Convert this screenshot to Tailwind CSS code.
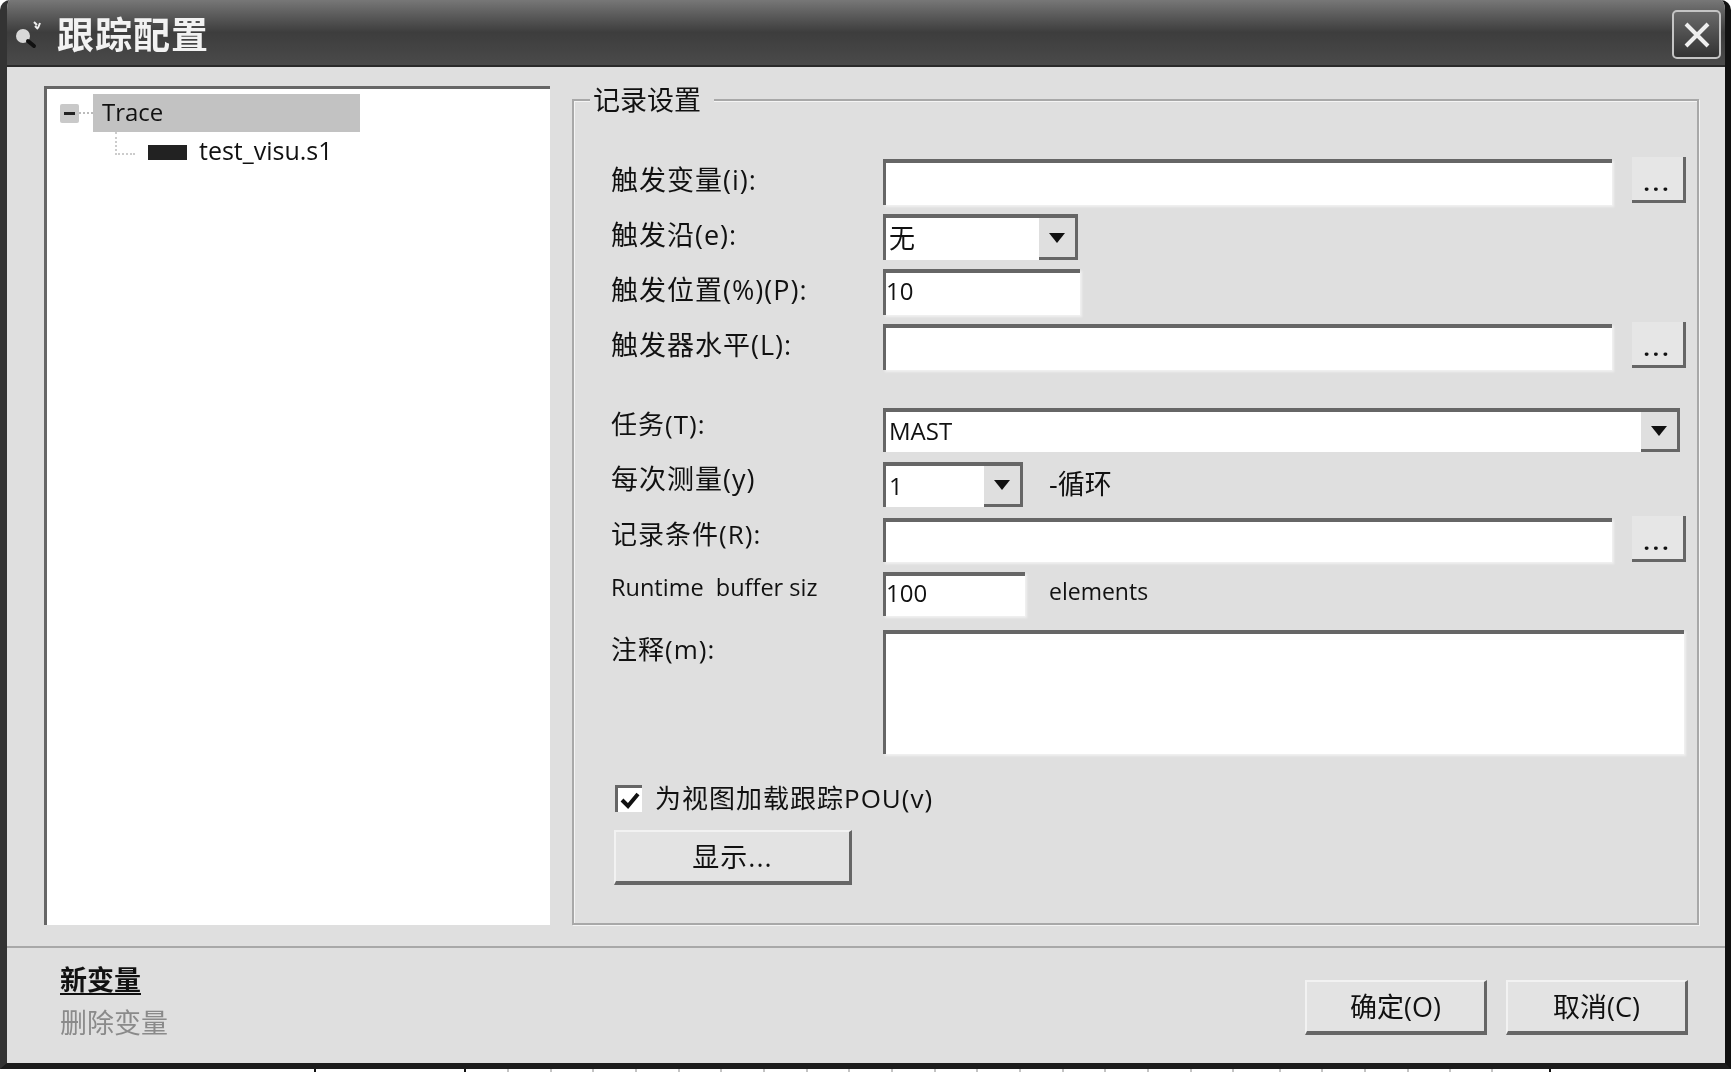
<!DOCTYPE html>
<html lang="zh">
<head>
  <meta charset="UTF-8" />
  <title>跟踪配置</title>
  <script src="https://cdn.jsdelivr.net/npm/@tailwindcss/browser@4"></script>
</head>
<body class="bg-white overflow-hidden">
  <div class="w-[1731px] h-[1072px] flex flex-col blur-[0.5px] font-['Open_Sans','Noto_Sans_CJK_SC',sans-serif] text-[24px] leading-none text-[#111]">

    <!-- window -->
    <div class="w-[1731px] h-[1069px] flex flex-col bg-[#dfdfdf] rounded-t-[10px] overflow-hidden border-l-[7px] border-r-[6px] border-b-[6px] border-l-[#333] border-r-[#111] border-b-[#1c1c1c]">

      <!-- title bar -->
      <div class="-ml-[7px] -mr-[6px] h-[67px] shrink-0 flex items-center pt-[4px] bg-gradient-to-b from-[#777] via-[#3d3d3d] to-[#4a4a4a] border-b-2 border-[#2a2a2a]">
        <svg class="ml-[12px] w-[32px] h-[32px] shrink-0" viewBox="0 0 32 32">
          <circle cx="11" cy="17" r="7" fill="#d8d8d8" />
          <path d="M16 22l6 5" stroke="#111" stroke-width="4" stroke-linecap="round" />
          <path d="M23 7l3 3M28 4l-2 5M22 3l3 3" stroke="#eee" stroke-width="2" />
        </svg>
        <span class="ml-[13px] text-[37px] font-bold tracking-[1px] text-[#f2f2f2]">跟踪配置</span>
        <button class="ml-auto mr-[10px] w-[49px] h-[49px] rounded-[5px] border-2 border-[#c4c4c4] bg-gradient-to-b from-[#6a6a6a] to-[#333] flex items-center justify-center">
          <svg class="w-[30px] h-[30px]" viewBox="0 0 30 30"><path d="M4 4l22 22M26 4L4 26" stroke="#eee" stroke-width="4" /></svg>
        </button>
      </div>

      <!-- content -->
      <div class="h-[879px] shrink-0 flex pl-[37px] pt-[19px]">

        <!-- tree -->
        <div class="w-[506px] h-[839px] bg-white border-t-[3px] border-l-[3px] border-[#666] pt-[5px] pl-[13px]">
          <div class="flex items-center h-[38px]">
            <span class="w-[19px] h-[19px] rounded-[2px] bg-[#c9c9c9] flex items-center justify-center">
              <span class="w-[11px] h-[3px] bg-[#222]"></span>
            </span>
            <span class="w-[14px] border-t-2 border-dotted border-[#bbb]"></span>
            <span class="w-[267px] h-[38px] bg-[#c2c2c2] flex items-center pl-[9px] pb-[3px]">Trace</span>
          </div>
          <div class="flex items-start h-[38px] pl-[55px]">
            <span class="w-[20px] h-[23px] border-l-2 border-b-2 border-dotted border-[#ccc] shrink-0"></span>
            <span class="ml-[13px] mt-[13px] w-[39px] h-[15px] bg-[#222] shrink-0"></span>
            <span class="ml-[12px] mt-[6px] text-[25px]">test_visu.s1</span>
          </div>
        </div>

        <!-- record settings -->
        <div class="ml-[22px] mt-[13px] w-[1127px] h-[826px] border-2 border-[#a8a8a8] pl-[37px] shadow-[1px_1px_0_#f4f4f4,inset_1px_1px_0_#f4f4f4]">
          <div class="-mt-[16px] -ml-[21px] w-fit bg-[#dfdfdf] pl-[3px] pr-[13px] h-[28px] text-[27px] flex items-center">记录设置</div>

          <div class="mt-[46px] flex h-[46px]">
            <label class="w-[272px] h-[40px] flex items-center text-[27px] tracking-[1px]">触发变量(i):</label>
            <div class="w-[729px] h-[46px] bg-white border-t-[4px] border-l-[3px] border-[#666] shadow-[2px_2px_2px_#f0f0f0]"></div>
            <button class="ml-[20px] -mt-[2px] w-[54px] h-[46px] bg-[#e6e6e6] border-r-[3px] border-b-[3px] border-[#666] pt-[6px] font-bold tracking-[3px] text-[22px]">...</button>
          </div>

          <div class="mt-[9px] flex h-[46px]">
            <label class="w-[272px] h-[40px] flex items-center text-[27px] tracking-[1px]">触发沿(e):</label>
            <div class="w-[195px] h-[46px] bg-white border-l-[3px] border-t-[4px] border-[#666] flex items-center pl-[3px] text-[26px]"><span class="pb-[3px]">无</span>
              <span class="ml-auto w-[39px] h-full bg-[#dfdfdf] border-r-[3px] border-b-[3px] border-[#666] flex items-center justify-center">
                <svg class="w-[18px] h-[10px]" viewBox="0 0 18 10"><path d="M1 0h16L9 10z" fill="#111" /></svg>
              </span>
            </div>
          </div>

          <div class="mt-[9px] flex h-[46px]">
            <label class="w-[272px] h-[40px] flex items-center text-[27px] tracking-[1px]">触发位置(%)(P):</label>
            <div class="w-[197px] h-[46px] bg-white border-t-[4px] border-l-[3px] border-[#666] shadow-[2px_2px_2px_#f0f0f0] flex items-center pb-[6px]">10</div>
          </div>

          <div class="mt-[9px] flex h-[46px]">
            <label class="w-[272px] h-[40px] flex items-center text-[27px] tracking-[1px]">触发器水平(L):</label>
            <div class="w-[729px] h-[46px] bg-white border-t-[4px] border-l-[3px] border-[#666] shadow-[2px_2px_2px_#f0f0f0]"></div>
            <button class="ml-[20px] -mt-[2px] w-[54px] h-[46px] bg-[#e6e6e6] border-r-[3px] border-b-[3px] border-[#666] pt-[6px] font-bold tracking-[3px] text-[22px]">...</button>
          </div>

          <div class="mt-[38px] flex h-[44px]">
            <label class="w-[272px] h-[32px] flex items-center text-[26px] tracking-[1px]">任务(T):</label>
            <div class="w-[797px] h-[44px] bg-white border-l-[3px] border-t-[4px] border-[#666] flex items-center pl-[3px]"><span class="pb-[3px]">MAST</span>
              <span class="ml-auto w-[39px] h-full bg-[#dfdfdf] border-r-[3px] border-b-[3px] border-[#666] flex items-center justify-center">
                <svg class="w-[18px] h-[10px]" viewBox="0 0 18 10"><path d="M1 0h16L9 10z" fill="#111" /></svg>
              </span>
            </div>
          </div>

          <div class="mt-[10px] flex h-[45px]">
            <label class="w-[272px] h-[33px] flex items-center text-[27px] tracking-[1px]">每次测量(y)</label>
            <div class="w-[140px] h-[45px] bg-white border-l-[3px] border-t-[4px] border-[#666] flex items-center pl-[3px]"><span class="pb-[1px]">1</span>
              <span class="ml-auto w-[39px] h-full bg-[#dfdfdf] border-r-[3px] border-b-[3px] border-[#666] flex items-center justify-center">
                <svg class="w-[18px] h-[10px]" viewBox="0 0 18 10"><path d="M1 0h16L9 10z" fill="#111" /></svg>
              </span>
            </div>
            <span class="ml-[26px] h-[42px] flex items-center text-[27px]">-循环</span>
          </div>

          <div class="mt-[11px] flex h-[44px]">
            <label class="w-[272px] h-[31px] flex items-center text-[26px] tracking-[1px]">记录条件(R):</label>
            <div class="w-[729px] h-[44px] bg-white border-t-[4px] border-l-[3px] border-[#666] shadow-[2px_2px_2px_#f0f0f0]"></div>
            <button class="ml-[20px] -mt-[2px] w-[54px] h-[46px] bg-[#e6e6e6] border-r-[3px] border-b-[3px] border-[#666] pt-[6px] font-bold tracking-[3px] text-[22px]">...</button>
          </div>

          <div class="mt-[10px] flex h-[44px]">
            <label class="w-[272px] h-[32px] flex items-center whitespace-pre text-[23.5px]">Runtime  buffer siz</label>
            <div class="w-[142px] h-[44px] bg-white border-t-[4px] border-l-[3px] border-[#666] shadow-[2px_2px_2px_#f0f0f0] flex items-center pb-[6px]">100</div>
            <span class="ml-[24px] h-[38px] flex items-center text-[23px]">elements</span>
          </div>

          <div class="mt-[14px] flex h-[124px]">
            <label class="w-[272px] h-[38px] flex items-center text-[26px] tracking-[1px]">注释(m):</label>
            <div class="w-[801px] h-[124px] bg-white border-t-[4px] border-l-[3px] border-[#666] shadow-[2px_2px_2px_#f0f0f0]"></div>
          </div>

          <div class="mt-[30px] ml-[4px] flex items-center h-[28px]">
            <span class="w-[27px] h-[27px] bg-white border-t-[3px] border-l-[3px] border-[#666] flex items-center justify-center">
              <svg class="w-[20px] h-[18px]" viewBox="0 0 20 18"><path d="M2 9l6 6L18 3" fill="none" stroke="#111" stroke-width="4" /></svg>
            </span>
            <span class="ml-[13px] text-[26px] tracking-[1px]">为视图加载跟踪POU(v)</span>
          </div>

          <button class="mt-[18px] ml-[3px] w-[238px] h-[55px] bg-[#e3e3e3] border-2 border-t-[#f2f2f2] border-l-[#f2f2f2] border-r-[3px] border-b-[4px] border-r-[#666] border-b-[#666] text-[27px] tracking-[1px]">显示...</button>
        </div>
      </div>

      <!-- footer -->
      <div class="flex-1 flex border-t-2 border-[#a8a8a8] pl-[53px]">
        <div class="pt-[18px] text-[27px]">
          <div class="font-bold underline underline-offset-[3px] h-[43px]">新变量</div>
          <div class="text-[#8a8a8a]">删除变量</div>
        </div>
        <div class="ml-auto mr-[37px] mt-[32px] flex gap-[19px]">
          <button class="w-[182px] h-[55px] bg-[#e3e3e3] border-2 border-t-[#f2f2f2] border-l-[#f2f2f2] border-r-[3px] border-b-[4px] border-r-[#666] border-b-[#666] text-[27px]">确定(O)</button>
          <button class="w-[182px] h-[55px] bg-[#e3e3e3] border-2 border-t-[#f2f2f2] border-l-[#f2f2f2] border-r-[3px] border-b-[4px] border-r-[#666] border-b-[#666] text-[27px]">取消(C)</button>
        </div>
      </div>
    </div>

    <!-- ruler ticks below the window -->
    <svg class="w-[1731px] h-[3px] block" viewBox="0 0 1731 3">
      <path d="M315 0v3M465 0v3M1550 0v3" stroke="#111" stroke-width="2" />
      <path d="M508 0v3M551 0v3M593 0v3M636 0v3M679 0v3M721 0v3M764 0v3M807 0v3M849 0v3M892 0v3M935 0v3M977 0v3M1020 0v3M1063 0v3M1105 0v3M1148 0v3M1191 0v3M1233 0v3M1280 0v3M1322 0v3M1365 0v3M1408 0v3M1450 0v3M1492 0v3" stroke="#888" stroke-width="1" />
    </svg>
  </div>
</body>
</html>
